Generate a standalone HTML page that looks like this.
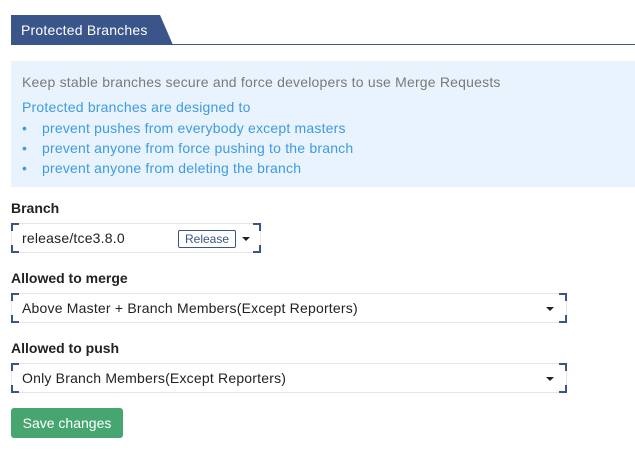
<!DOCTYPE html><html><head><style>
body{margin:0;background:#fff;font-family:"Liberation Sans",sans-serif;width:635px;height:454px;position:relative;overflow:hidden}
.tab{position:absolute;left:11px;top:15px;height:30px;width:162px;background:#3a5589;clip-path:polygon(0 0,149px 0,162px 30px,0 30px);color:#fff;font-size:14px;line-height:31px;padding-left:10px;box-sizing:border-box;letter-spacing:0.2px}
.line{position:absolute;left:11px;right:0;top:44px;height:1px;background:#3a5589}
.info{position:absolute;left:11px;top:61px;width:624px;height:126px;background:#e8f3fd;font-size:14px;letter-spacing:0.2px}
.info div{position:absolute;left:11px}
.info span{position:absolute;left:20px;white-space:nowrap}
.g{color:#7a7a7a}.b{color:#3f9be0}
.lbl{position:absolute;left:11px;font-size:14px;font-weight:bold;color:#222}
.sel{position:absolute;left:11px;height:30px;border:1px solid #e6e6e6;box-sizing:border-box;font-size:14px;color:#222;line-height:28px;padding-left:10px;letter-spacing:0.2px}
.c{position:absolute;width:6px;height:6px;border:0 solid #3a5589}
.tl{left:-1px;top:-1px;border-left-width:2px;border-top-width:2px}
.tr{right:-1px;top:-1px;border-right-width:2px;border-top-width:2px}
.bl{left:-1px;bottom:-1px;border-left-width:2px;border-bottom-width:2px}
.br{right:-1px;bottom:-1px;border-right-width:2px;border-bottom-width:2px}
.ar{position:absolute;top:13px;width:0;height:0;border-left:4px solid transparent;border-right:4px solid transparent;border-top:4px solid #222}
.tag{position:absolute;left:166px;top:6px;height:16px;border:1px solid #3a5589;border-radius:2px;color:#3a5589;font-size:12px;line-height:16px;padding:0 6px;letter-spacing:0}
.btn{position:absolute;left:11px;top:408px;width:112px;height:30px;background:#47a66f;border-radius:3px;color:#fff;font-size:14px;line-height:30px;text-align:center}
</style></head><body>
<div class="tab">Protected Branches</div><div class="line"></div>
<div class="info">
<div class="g" style="top:13px">Keep stable branches secure and force developers to use Merge Requests</div>
<div class="b" style="top:38px">Protected branches are designed to</div>
<div class="b" style="top:59px">•<span>prevent pushes from everybody except masters</span></div>
<div class="b" style="top:79px">•<span>prevent anyone from force pushing to the branch</span></div>
<div class="b" style="top:99px">•<span>prevent anyone from deleting the branch</span></div>
</div>
<div class="lbl" style="top:200px">Branch</div>
<div class="sel" style="top:223px;width:250px">release/tce3.8.0<span class="tag">Release</span><span class="ar" style="left:230px"></span><i class="c tl"></i><i class="c tr"></i><i class="c bl"></i><i class="c br"></i></div>
<div class="lbl" style="top:270px">Allowed to merge</div>
<div class="sel" style="top:293px;width:556px">Above Master + Branch Members(Except Reporters)<span class="ar" style="left:534px"></span><i class="c tl"></i><i class="c tr"></i><i class="c bl"></i><i class="c br"></i></div>
<div class="lbl" style="top:340px">Allowed to push</div>
<div class="sel" style="top:363px;width:556px">Only Branch Members(Except Reporters)<span class="ar" style="left:534px"></span><i class="c tl"></i><i class="c tr"></i><i class="c bl"></i><i class="c br"></i></div>
<div class="btn">Save changes</div>
</body></html>
